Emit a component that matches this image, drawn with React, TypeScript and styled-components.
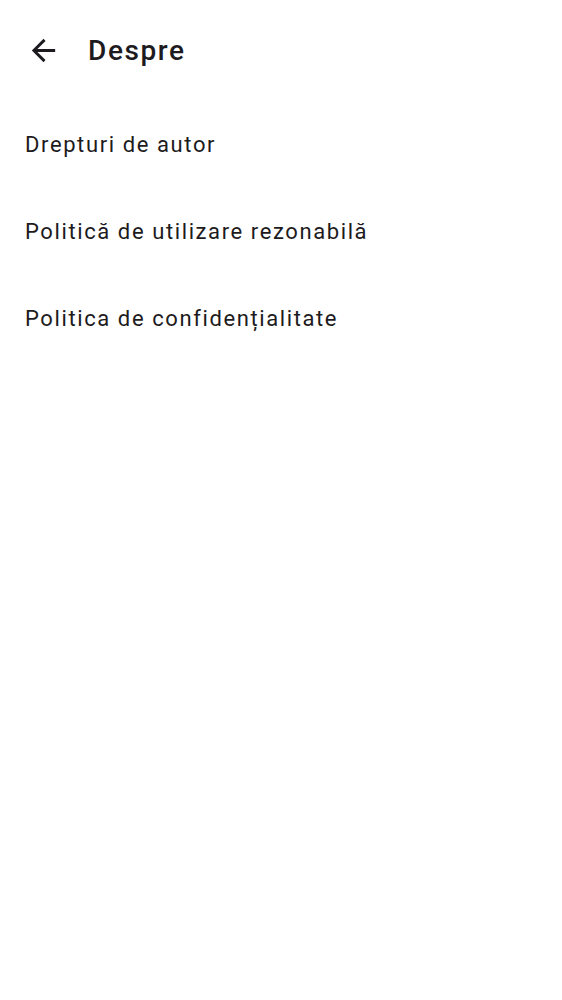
import { FC } from 'react';
import styled, { createGlobalStyle } from 'styled-components';

const GlobalStyle = createGlobalStyle`
   html, body {
      margin: 0;
      padding: 0;
      background: #ffffff;
   }
   body {
      font-family: Roboto, 'Noto Sans', Arial, sans-serif;
      color: #1d1b20;
   }
`;

const Page = styled.div`
   width: 562px;
   min-height: 1000px;
   background: #ffffff;
`;

const TopBar = styled.header`
   height: 100px;
   display: flex;
   align-items: center;
   padding-left: 26px;
`;

const BackBtn = styled.button`
   width: 35px;
   height: 35px;
   padding: 0;
   border: none;
   background: none;
   display: flex;
   align-items: center;
   justify-content: center;
   color: #1d1b20;
   cursor: pointer;
`;

const Title = styled.h1`
   margin: 0 0 0 27px;
   font-size: 28px;
   font-weight: 500;
   letter-spacing: 1.6px;
`;

const Menu = styled.ul`
   list-style: none;
   margin: 0;
   padding: 1px 0 0;
`;

const MenuItem = styled.li`
   height: 87px;
   display: flex;
   align-items: center;
   padding-left: 25px;
   font-size: 22px;
   letter-spacing: 1.6px;
`;

const items = ['Drepturi de autor', 'Politică de utilizare rezonabilă', 'Politica de confidențialitate'];

const App: FC = (): JSX.Element => {
   return (
      <Page>
         <GlobalStyle />
         <TopBar>
            <BackBtn aria-label="Înapoi">
               <svg width="35" height="35" viewBox="0 0 24 24" fill="currentColor">
                  <path d="M20 11H7.83l5.59-5.59L12 4l-8 8 8 8 1.41-1.41L7.83 13H20v-2z" />
               </svg>
            </BackBtn>
            <Title>Despre</Title>
         </TopBar>
         <Menu>
            {items.map((item) => (
               <MenuItem key={item}>{item}</MenuItem>
            ))}
         </Menu>
      </Page>
   );
};

export default App;
